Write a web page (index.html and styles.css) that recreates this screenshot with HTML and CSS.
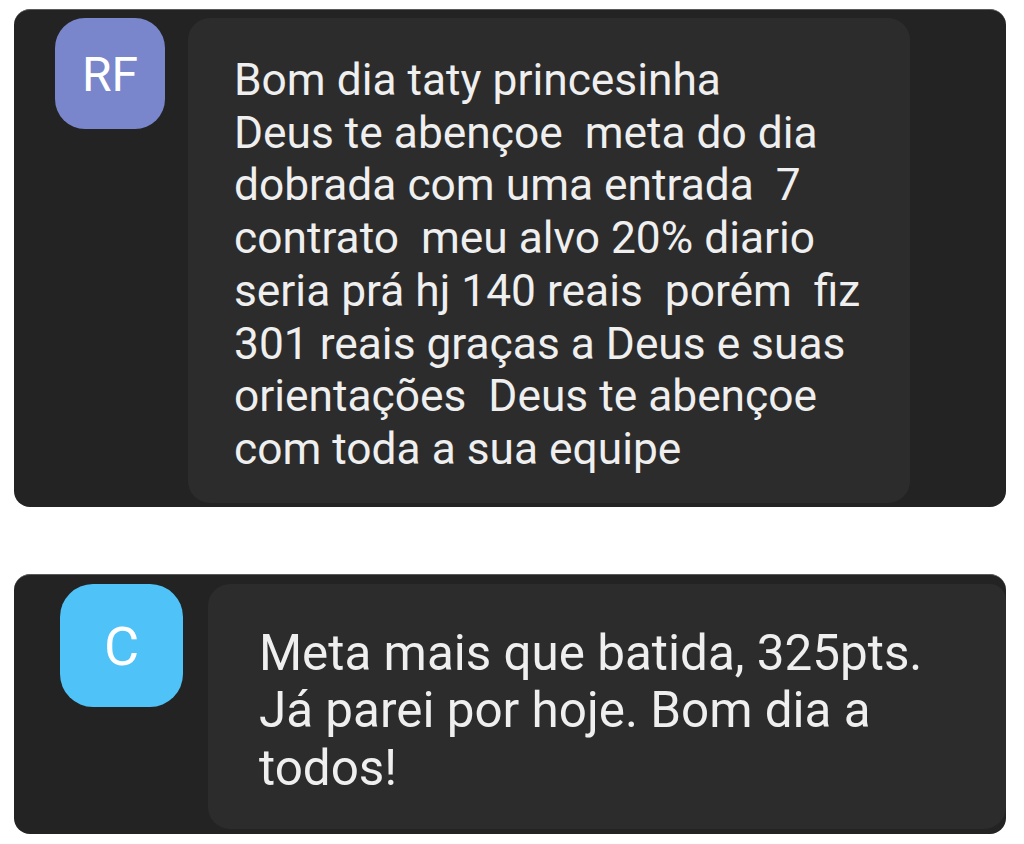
FILE: index.html
```html
<!DOCTYPE html>
<html lang="pt-br">

<head>
    <meta charset="UTF-8">
    <meta name="viewport" content="width=device-width, initial-scale=1.0">
    <title>Mensagens</title>
    <link rel="stylesheet" href="styles.css">
</head>

<body>
    <!-- mensagem 1 -->
    <div class="card card-one">
        <div class="avatar avatar-rf">RF</div>
        <div class="bubble">Bom dia taty princesinha
Deus te abençoe  meta do dia
dobrada com uma entrada  7
contrato  meu alvo 20% diario
seria prá hj 140 reais  porém  fiz
301 reais graças a Deus e suas
orientações  Deus te abençoe
com toda a sua equipe</div>
    </div>

    <!-- mensagem 2 -->
    <div class="card card-two">
        <div class="avatar avatar-c">C</div>
        <div class="bubble">Meta mais que batida, 325pts.
Já parei por hoje. Bom dia a
todos!</div>
    </div>
</body>

</html>
```

FILE: styles.css
```css
* {
    padding: 0;
    margin: 0;
    box-sizing: border-box;
}

body {
    background-color: #fff;
    font-family: Roboto, "Noto Sans", sans-serif;
    padding-top: 9px;
}

.card {
    display: flex;
    align-items: flex-start;
    width: 992px;
    margin-left: 14px;
    background-color: #232323;
    border-radius: 16px;
    border-top: 1px solid #5a5a5a;
}

.avatar {
    flex: none;
    display: flex;
    align-items: center;
    justify-content: center;
    color: #fff;
}

.bubble {
    background-color: #2c2c2c;
    border-radius: 22px;
    color: #efefef;
    white-space: pre-wrap;
}

/* primeira */
.card-one {
    padding: 8px 96px 4px 41px;
    gap: 23px;
}

.avatar-rf {
    width: 110px;
    height: 111px;
    border-radius: 30px;
    background-color: #7986cb;
    font-size: 48px;
    padding-top: 2px;
}

.card-one .bubble {
    width: 722px;
    padding: 36px 0 27px 46px;
    font-size: 44.3px;
    line-height: 52.7px;
}

/* segunda */
.card-two {
    margin-top: 67px;
    padding: 9px 0 5px 46px;
    gap: 25px;
}

.avatar-c {
    width: 123px;
    height: 123px;
    border-radius: 33px;
    background-color: #4fc3f7;
    font-size: 54px;
    padding-top: 2px;
}

.card-two .bubble {
    flex: 1;
    padding: 41px 0 32px 51px;
    font-size: 49.4px;
    line-height: 57.5px;
    border-top-right-radius: 16px;
}
```
